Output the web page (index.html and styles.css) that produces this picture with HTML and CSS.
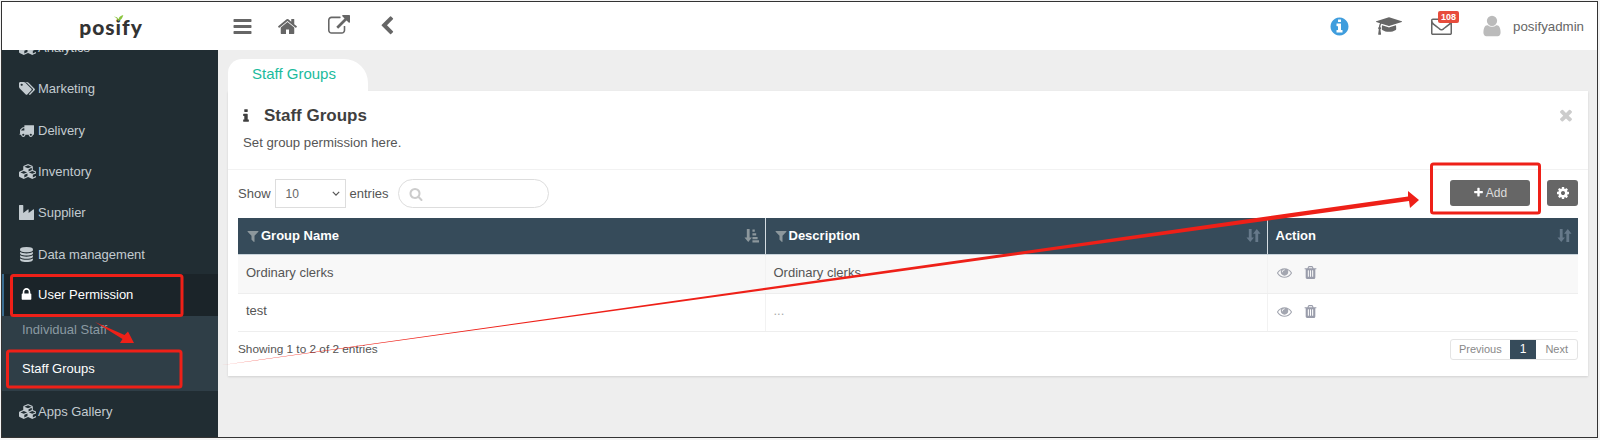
FILE: index.html
```html
<!DOCTYPE html>
<html lang="en">
<head>
    <meta charset="UTF-8">
    <meta name="viewport" content="width=device-width, initial-scale=1.0">
    <title>Staff Groups</title>
    <link rel="stylesheet" href="styles.css">
</head>
<body>
    <!-- icon sprite -->
    <svg class="sprite" xmlns="http://www.w3.org/2000/svg">
        <symbol id="i-bars" viewBox="0 0 1792 1792"><path d="M1664 1344v128q0 26-19 45t-45 19h-1408q-26 0-45-19t-19-45v-128q0-26 19-45t45-19h1408q26 0 45 19t19 45zm0-512v128q0 26-19 45t-45 19h-1408q-26 0-45-19t-19-45v-128q0-26 19-45t45-19h1408q26 0 45 19t19 45zm0-512v128q0 26-19 45t-45 19h-1408q-26 0-45-19t-19-45v-128q0-26 19-45t45-19h1408q26 0 45 19t19 45z"/></symbol>
        <symbol id="i-home" viewBox="0 0 1792 1792"><path d="M1472 992v480q0 26-19 45t-45 19h-384v-384h-256v384h-384q-26 0-45-19t-19-45v-480q0-1 .5-3t.5-3l575-474 575 474q1 2 1 6zm223-69l-62 74q-8 9-21 11h-3q-13 0-21-7l-692-577-692 577q-12 8-24 7-13-2-21-11l-62-74q-8-10-7-23.500t11-21.500l719-599q32-26 76-26t76 26l244 204v-195q0-14 9-23t23-9h192q14 0 23 9t9 23v408l219 182q10 8 11 21.500t-7 23.500z"/></symbol>
        <symbol id="i-external" viewBox="0 0 1792 1792"><path d="M1408 928v320q0 119-84.500 203.500t-203.500 84.500h-832q-119 0-203.500-84.500t-84.500-203.500v-832q0-119 84.500-203.500t203.500-84.500h704q14 0 23 9t9 23v64q0 14-9 23t-23 9h-704q-66 0-113 47t-47 113v832q0 66 47 113t113 47h832q66 0 113-47t47-113v-320q0-14 9-23t23-9h64q14 0 23 9t9 23zm384-864v512q0 26-19 45t-45 19-45-19l-176-176-652 652q-10 10-23 10t-23-10l-114-114q-10-10-10-23t10-23l652-652-176-176q-19-19-19-45t19-45 45-19h512q26 0 45 19t19 45z"/></symbol>
        <symbol id="i-chevron" viewBox="0 0 1792 1792"><path d="M1427 301l-531 531 531 531q19 19 19 45t-19 45l-166 166q-19 19-45 19t-45-19l-742-742q-19-19-19-45t19-45l742-742q19-19 45-19t45 19l166 166q19 19 19 45t-19 45z"/></symbol>
        <symbol id="i-info-circle" viewBox="0 0 1792 1792"><path d="M1152 1376v-160q0-14-9-23t-23-9h-96v-512q0-14-9-23t-23-9h-320q-14 0-23 9t-9 23v160q0 14 9 23t23 9h96v320h-96q-14 0-23 9t-9 23v160q0 14 9 23t23 9h448q14 0 23-9t9-23zm-128-896v-160q0-14-9-23t-23-9h-192q-14 0-23 9t-9 23v160q0 14 9 23t23 9h192q14 0 23-9t9-23zm640 416q0 209-103 385.500t-279.500 279.500-385.500 103-385.500-103-279.500-279.500-103-385.500 103-385.500 279.500-279.500 385.500-103 385.500 103 279.500 279.500 103 385.500z"/></symbol>
        <symbol id="i-info" viewBox="0 0 1792 1792"><path d="M1216 1344v128q0 26-19 45t-45 19h-512q-26 0-45-19t-19-45v-128q0-26 19-45t45-19h64v-384h-64q-26 0-45-19t-19-45v-128q0-26 19-45t45-19h384q26 0 45 19t19 45v576h64q26 0 45 19t19 45zm-128-1152v192q0 26-19 45t-45 19h-256q-26 0-45-19t-19-45v-192q0-26 19-45t45-19h256q26 0 45 19t19 45z"/></symbol>
        <symbol id="i-times" viewBox="0 0 1792 1792"><path d="M1490 1322q0 40-28 68l-136 136q-28 28-68 28t-68-28l-294-294-294 294q-28 28-68 28t-68-28l-136-136q-28-28-28-68t28-68l294-294-294-294q-28-28-28-68t28-68l136-136q28-28 68-28t68 28l294 294 294-294q28-28 68-28t68 28l136 136q28 28 28 68t-28 68l-294 294 294 294q28 28 28 68z"/></symbol>
        <symbol id="i-plus" viewBox="0 0 1792 1792"><path d="M1600 736v192q0 40-28 68t-68 28h-416v416q0 40-28 68t-68 28h-192q-40 0-68-28t-28-68v-416h-416q-40 0-68-28t-28-68v-192q0-40 28-68t68-28h416v-416q0-40 28-68t68-28h192q40 0 68 28t28 68v416h416q40 0 68 28t28 68z"/></symbol>
        <symbol id="i-cog" viewBox="0 0 1792 1792"><path d="M1152 896q0-106-75-181t-181-75-181 75-75 181 75 181 181 75 181-75 75-181zm512-109v222q0 12-8 23t-20 13l-185 28q-19 54-39 91 35 50 107 138 10 12 10 25t-9 23q-27 37-99 108t-94 71q-12 0-26-9l-138-108q-44 23-91 38-16 136-29 186-7 28-36 28h-222q-14 0-24.500-8.500t-11.500-21.500l-28-184q-49-16-90-37l-141 107q-10 9-25 9-14 0-25-11-126-114-165-168-7-10-7-23 0-12 8-23 15-21 51-66.500t54-70.500q-27-50-41-99l-183-27q-13-2-21-12.500t-8-23.500v-222q0-12 8-23t19-13l186-28q14-46 39-92-40-57-107-138-10-12-10-24 0-10 9-23 26-36 98.500-107.500t94.500-71.500q13 0 26 10l138 107q44-23 91-38 16-136 29-186 7-28 36-28h222q14 0 24.500 8.500t11.500 21.500l28 184q49 16 90 37l142-107q9-9 24-9 13 0 25 10 129 119 165 170 7 8 7 22 0 12-8 23-15 21-51 66.500t-54 70.500q26 50 41 98l183 28q13 2 21 12.500t8 23.500z"/></symbol>
        <symbol id="i-filter" viewBox="0 0 1792 1792"><path d="M1595 295q17 41-14 70l-493 493v742q0 42-39 59-13 5-25 5-27 0-45-19l-256-256q-19-19-19-45v-486l-493-493q-31-29-14-70 17-39 59-39h1280q42 0 59 39z"/></symbol>
        <symbol id="i-search" viewBox="0 0 1792 1792"><path d="M1216 832q0-185-131.500-316.500t-316.500-131.500-316.500 131.500-131.500 316.500 131.500 316.500 316.500 131.500 316.500-131.500 131.500-316.500zm512 832q0 52-38 90t-90 38q-54 0-90-38l-343-342q-179 124-399 124-143 0-273.500-55.500t-225-150-150-225-55.500-273.500 55.500-273.500 150-225 225-150 273.500-55.500 273.500 55.500 225 150 150 225 55.500 273.500q0 220-124 399l343 343q37 37 37 90z"/></symbol>
        <symbol id="i-lock" viewBox="0 0 1792 1792" preserveAspectRatio="xMinYMid"><path d="M640 768h512v-192q0-106-75-181t-181-75-181 75-75 181v192zm832 96v576q0 40-28 68t-68 28h-960q-40 0-68-28t-28-68v-576q0-40 28-68t68-28h32v-192q0-184 132-316t316-132 316 132 132 316v192h32q40 0 68 28t28 68z"/></symbol>
        <symbol id="i-eye" viewBox="0 0 1792 1792"><path d="M1664 960q-152-236-381-353 61 104 61 225 0 185-131.500 316.500t-316.500 131.500-316.500-131.500-131.500-316.500q0-121 61-225-229 117-381 353 133 205 333.500 326.500t434.500 121.500 434.500-121.500 333.500-326.500zm-720-384q0-20-14-34t-34-14q-125 0-214.500 89.500t-89.500 214.500q0 20 14 34t34 14 34-14 14-34q0-86 61-147t147-61q20 0 34-14t14-34zm848 384q0 34-20 69-140 230-376.500 368.500t-499.500 138.500-499.500-139-376.500-368q-20-35-20-69t20-69q140-229 376.500-368t499.500-139 499.500 139 376.500 368q20 35 20 69z"/></symbol>
        <symbol id="i-trash" viewBox="0 0 1792 1792"><path d="M704 1376v-704q0-14-9-23t-23-9h-64q-14 0-23 9t-9 23v704q0 14 9 23t23 9h64q14 0 23-9t9-23zm256 0v-704q0-14-9-23t-23-9h-64q-14 0-23 9t-9 23v704q0 14 9 23t23 9h64q14 0 23-9t9-23zm256 0v-704q0-14-9-23t-23-9h-64q-14 0-23 9t-9 23v704q0 14 9 23t23 9h64q14 0 23-9t9-23zm-544-992h448l-48-117q-7-9-17-11h-317q-10 2-17 11zm928 32v64q0 14-9 23t-23 9h-96v948q0 83-47 143.500t-113 60.500h-832q-66 0-113-58.500t-47-141.500v-952h-96q-14 0-23-9t-9-23v-64q0-14 9-23t23-9h309l70-167q15-37 54-63t79-26h320q40 0 79 26t54 63l70 167h309q14 0 23 9t9 23z"/></symbol>
        <symbol id="i-database" viewBox="0 0 1792 1792" preserveAspectRatio="xMinYMid"><path d="M896 768q237 0 443-43t325-127v170q0 69-103 128t-280 93.500-385 34.500-385-34.500-280-93.500-103-128v-170q119 84 325 127t443 43zm0 768q237 0 443-43t325-127v170q0 69-103 128t-280 93.500-385 34.500-385-34.500-280-93.500-103-128v-170q119 84 325 127t443 43zm0-384q237 0 443-43t325-127v170q0 69-103 128t-280 93.500-385 34.500-385-34.500-280-93.500-103-128v-170q119 84 325 127t443 43zm0-1152q208 0 385 34.500t280 93.500 103 128v128q0 69-103 128t-280 93.500-385 34.500-385-34.500-280-93.500-103-128v-128q0-69 103-128t280-93.500 385-34.500z"/></symbol>
        <symbol id="i-user" viewBox="0 0 1792 1792"><path d="M1536 1399q0 109-62.500 187t-150.500 78h-854q-88 0-150.500-78t-62.500-187q0-85 8.500-160.500t31.500-152 58.500-131 94-89 134.500-34.500q131 128 313 128t313-128q76 0 134.500 34.500t94 89 58.500 131 31.500 152 8.500 160.500zm-256-887q0 159-112.500 271.500t-271.500 112.500-271.500-112.500-112.500-271.500 112.500-271.500 271.500-112.500 271.500 112.500 112.500 271.500z"/></symbol>
        <symbol id="i-envelope" viewBox="0 0 1792 1792"><path d="M1664 1504v-768q-32 36-69 66-268 206-426 338-51 43-83 67t-86.500 48.500-102.500 24.500h-2q-48 0-102.500-24.500t-86.500-48.500-83-67q-158-132-426-338-37-30-69-66v768q0 13 9.500 22.500t22.500 9.500h1472q13 0 22.500-9.500t9.500-22.500zm0-1051v-24.500l-.5-13-3-12.500-5.500-9-9-7.500-14-2.500h-1472q-13 0-22.500 9.500t-9.500 22.500q0 168 147 284 193 152 401 317 6 5 35 29.500t46 37.500 44.500 31.500 50.500 27.500 43 9h2q20 0 43-9t50.500-27.500 44.500-31.500 46-37.500 35-29.500q208-165 401-317 54-43 100.500-115.500t46.500-131.500zm128-37v1088q0 66-47 113t-113 47h-1472q-66 0-113-47t-47-113v-1088q0-66 47-113t113-47h1472q66 0 113 47t47 113z"/></symbol>
        <symbol id="i-cap" viewBox="0 0 2304 1792"><path d="M1774 836l18 316q4 69-82 128t-235 93.500-323 34.500-323-34.500-235-93.500-82-128l18-316 574 181q22 7 48 7t48-7zm530-324q0 23-22 31l-1120 352q-4 1-10 1t-10-1l-652-206q-43 34-71 111.500t-34 178.500q63 36 63 109 0 69-58 107l58 433q2 14-8 25-9 11-24 11h-192q-15 0-24-11-10-11-8-25l58-433q-58-38-58-107 0-73 65-111 11-207 98-330l-333-104q-22-8-22-31t22-31l1120-352q4-1 10-1t10 1l1120 352q22 8 22 31z"/></symbol>
        <symbol id="i-tags" viewBox="0 0 1920 1792" preserveAspectRatio="xMinYMid"><path d="M448 448q0-53-37.500-90.500t-90.500-37.500-90.500 37.500-37.500 90.500 37.500 90.500 90.500 37.500 90.500-37.500 37.500-90.500zm1067 576q0 53-37 90l-491 492q-39 37-91 37-53 0-90-37l-715-716q-38-37-64.500-101t-26.500-117v-416q0-52 38-90t90-38h416q53 0 117 26.500t102 64.500l715 714q37 39 37 91zm384 0q0 53-37 90l-491 492q-39 37-91 37-36 0-59-14t-53-45l470-470q37-37 37-90 0-52-37-91l-715-714q-38-38-102-64.500t-117-26.500h224q53 0 117 26.500t102 64.500l715 714q37 39 37 91z"/></symbol>
        <symbol id="i-truck" viewBox="0 0 1792 1792" preserveAspectRatio="xMinYMid"><path d="M640 1408q0-52-38-90t-90-38-90 38-38 90 38 90 90 38 90-38 38-90zm-384-512h384v-256h-158q-13 0-22 9l-195 195q-9 9-9 22v30zm1280 512q0-52-38-90t-90-38-90 38-38 90 38 90 90 38 90-38 38-90zm256-1088v1024q0 15-4 26.500t-13.500 18.500-16.500 11.500-23.500 6-22.500 2-25.500 0-22.500-.5q0 106-75 181t-181 75-181-75-75-181h-384q0 106-75 181t-181 75-181-75-75-181h-64q-3 0-22.500.5t-25.500 0-22.500-2-23.500-6-16.500-11.500-13.500-18.500-4-26.500q0-26 19-45t45-19v-320q0-8-.5-35t0-38 2.500-34.500 6.500-37 14-30.500 22.500-30l198-198q19-19 50.500-32t58.500-13h160v-192q0-26 19-45t45-19h1024q26 0 45 19t19 45z"/></symbol>
        <symbol id="i-industry" viewBox="0 0 1792 1792" preserveAspectRatio="xMinYMid"><path d="M448 0q26 0 45 19t19 45v891l536-429q17-14 40-14 26 0 45 19t19 45v379l536-429q17-14 40-14 26 0 45 19t19 45v1152q0 26-19 45t-45 19h-1664q-26 0-45-19t-19-45v-1664q0-26 19-45t45-19h384z"/></symbol>
        <symbol id="i-cubes" viewBox="0 0 2048 1792" preserveAspectRatio="xMinYMid"><path d="M640 1632l384-192v-314l-384 164v342zm-64-454l404-173-404-173-404 173zm1088 454l384-192v-314l-384 164v342zm-64-454l404-173-404-173-404 173zm-448-293l384-165v-266l-384 164v267zm-64-379l441-189-441-189-441 189zm1088 518v416q0 36-19 67t-52 47l-448 224q-25 14-57 14t-57-14l-448-224q-4-2-7-4-2 2-7 4l-448 224q-25 14-57 14t-57-14l-448-224q-33-16-52-47t-19-67v-416q0-38 21.500-70t56.500-48l434-186v-400q0-38 21.500-70t56.500-48l448-192q23-10 50-10t50 10l448 192q35 16 56.500 48t21.500 70v400l434 186q36 16 57 48t21 70z"/></symbol>
        <symbol id="i-sort" viewBox="0 0 16 16"><path d="M3 1h3v9h2.500l-4 5-4-5H3zM10 6H7.500l4-5 4 5H13v9h-3z"/></symbol>
        <symbol id="i-sort-asc" viewBox="0 0 16 16"><path d="M3 1h3v9h2.500l-4 5-4-5H3zM9 1.500h2.500v2.500H9zM9 5.500h4v2.500H9zM9 9.500h5.500V12H9zM9 13h7v2.500H9z"/></symbol>
    </svg>

    <div class="app">
        <header class="topbar">
            <div class="logo">
                <span class="logo-text">posify</span>
                <svg class="logo-leaf" viewBox="0 0 16 10"><path d="M7 10C6 6 4 4 0 3c4-1 7 1 8 5 0-4 3-7 8-8-1 5-4 9-9 10z"/></svg>
            </div>
            <nav class="top-tools">
                <svg class="tool tool-bars"><use href="#i-bars"/></svg>
                <svg class="tool tool-home"><use href="#i-home"/></svg>
                <svg class="tool tool-ext"><use href="#i-external"/></svg>
                <svg class="tool tool-back"><use href="#i-chevron"/></svg>
            </nav>
            <div class="top-right">
                <svg class="top-info"><use href="#i-info-circle"/></svg>
                <svg class="top-cap"><use href="#i-cap"/></svg>
                <div class="mail">
                    <svg class="top-mail"><use href="#i-envelope"/></svg>
                    <span class="badge">108</span>
                </div>
                <svg class="top-user"><use href="#i-user"/></svg>
                <span class="username">posifyadmin</span>
            </div>
        </header>

        <aside class="sidebar">
            <ul class="menu">
                <li class="menu-item"><svg class="menu-icon"><use href="#i-cubes"/></svg>Analytics</li>
                <li class="menu-item"><svg class="menu-icon"><use href="#i-tags"/></svg>Marketing</li>
                <li class="menu-item"><svg class="menu-icon"><use href="#i-truck"/></svg>Delivery</li>
                <li class="menu-item"><svg class="menu-icon"><use href="#i-cubes"/></svg>Inventory</li>
                <li class="menu-item"><svg class="menu-icon"><use href="#i-industry"/></svg>Supplier</li>
                <li class="menu-item"><svg class="menu-icon"><use href="#i-database"/></svg>Data management</li>
                <li class="menu-item active"><svg class="menu-icon"><use href="#i-lock"/></svg>User Permission</li>
                <li class="submenu">
                    <div class="sub-item">Individual Staff</div>
                    <div class="sub-item current">Staff Groups</div>
                </li>
                <li class="menu-item"><svg class="menu-icon"><use href="#i-cubes"/></svg>Apps Gallery</li>
            </ul>
        </aside>

        <main class="content">
            <div class="tabs"><div class="tab">Staff Groups</div></div>
            <section class="panel">
                <div class="panel-head">
                    <h2 class="panel-title"><svg class="title-icon"><use href="#i-info"/></svg>Staff Groups</h2>
                    <p class="panel-desc">Set group permission here.</p>
                    <svg class="panel-close"><use href="#i-times"/></svg>
                </div>
                <div class="panel-body">
                    <div class="controls">
                        <label class="length">Show
                            <span class="select">10<svg class="caret" viewBox="0 0 10 6"><path d="M1 1l4 4 4-4"/></svg></span>
                            entries</label>
                        <div class="search"><svg class="search-icon"><use href="#i-search"/></svg></div>
                        <button class="btn-add"><svg class="plus"><use href="#i-plus"/></svg>Add</button>
                        <button class="btn-cog"><svg class="cog"><use href="#i-cog"/></svg></button>
                    </div>
                    <table class="groups">
                        <thead>
                            <tr>
                                <th class="col-name"><div class="th-in"><svg class="th-filter"><use href="#i-filter"/></svg>Group Name<svg class="th-sort"><use href="#i-sort-asc"/></svg></div></th>
                                <th class="col-desc"><div class="th-in"><svg class="th-filter"><use href="#i-filter"/></svg>Description<svg class="th-sort dim"><use href="#i-sort"/></svg></div></th>
                                <th><div class="th-in">Action<svg class="th-sort dim"><use href="#i-sort"/></svg></div></th>
                            </tr>
                        </thead>
                        <tbody>
                            <tr class="odd">
                                <td>Ordinary clerks</td>
                                <td>Ordinary clerks</td>
                                <td class="actions"><svg class="act-eye"><use href="#i-eye"/></svg><svg class="act-trash"><use href="#i-trash"/></svg></td>
                            </tr>
                            <tr>
                                <td>test</td>
                                <td class="muted">...</td>
                                <td class="actions"><svg class="act-eye"><use href="#i-eye"/></svg><svg class="act-trash"><use href="#i-trash"/></svg></td>
                            </tr>
                        </tbody>
                    </table>
                    <div class="table-foot">
                        <span class="info">Showing 1 to 2 of 2 entries</span>
                        <div class="pager">
                            <span class="page">Previous</span>
                            <span class="page on">1</span>
                            <span class="page">Next</span>
                        </div>
                    </div>
                </div>
            </section>
        </main>
    </div>

    <!-- red markup drawn over the screenshot -->
    <svg class="markup" viewBox="0 0 1600 440">
        <rect x="11.500" y="275.500" width="170.500" height="40" rx="2"/>
        <rect x="7.500" y="351" width="173.500" height="36" rx="2"/>
        <rect x="1431.500" y="164" width="108" height="49" rx="2"/>
        <polygon class="fill" points="219,365.500 1408,196.500 1408,191 1419,200 1410,208 1409,201"/>
        <polygon class="fill" points="95,322 124.500,335 128,331.500 134,343 120,343 122.500,339"/>
    </svg>
</body>
</html>
```

FILE: styles.css
```css
* {
    box-sizing: border-box;
}
body {
    margin: 0;
    background: #f4f4f4;
    font-family: "Liberation Sans", Arial, sans-serif;
    font-size: 13px;
    color: #444;
    position: relative;
    width: 1600px;
    height: 440px;
    overflow: hidden;
}
svg {
    fill: currentColor;
}
.sprite {
    display: none;
}
.app {
    width: 1597px;
    height: 437px;
    margin: 1px 0 0 1px;
    border: 1px solid #333;
    display: grid;
    grid-template-columns: 216px 1fr;
    grid-template-rows: 48px 1fr;
    overflow: hidden;
}

/* top bar */
.topbar {
    grid-column: 1 / 3;
    background: #fff;
    display: flex;
    align-items: center;
    position: relative;
    z-index: 2;
}
.logo {
    width: 216px;
    display: flex;
    justify-content: center;
    position: relative;
    padding-left: 2px;
}
.logo-text {
    font-family: Lato, "Noto Sans", sans-serif;
    font-weight: 900;
    font-size: 21px;
    letter-spacing: 1px;
    color: #333;
}
.logo-leaf {
    position: absolute;
    left: 111px;
    top: 1px;
    width: 11px;
    height: 6px;
    fill: #8bc53f;
}
.top-tools {
    display: flex;
    align-items: center;
    color: #666;
    padding-left: 14px;
}
.tool {
    display: block;
}
.tool-bars {
    width: 21px;
    height: 21px;
    margin-right: 24px;
}
.tool-home {
    width: 21px;
    height: 21px;
    margin-right: 30px;
}
.tool-ext {
    width: 22px;
    height: 22px;
    margin-right: 27px;
}
.tool-back {
    width: 20px;
    height: 20px;
}
.top-right {
    margin-left: auto;
    display: flex;
    align-items: center;
    color: #666;
    padding-right: 13px;
}
.top-info {
    width: 21px;
    height: 21px;
    color: #3f9ddd;
    margin-right: 26px;
}
.top-cap {
    width: 26px;
    height: 22px;
    margin-right: 29px;
}
.mail {
    position: relative;
    width: 21px;
    height: 22px;
    margin-right: 28px;
}
.top-mail {
    width: 21px;
    height: 22px;
    display: block;
}
.badge {
    position: absolute;
    left: 7px;
    top: -4px;
    background: #e74c3c;
    color: #fff;
    font-size: 9px;
    font-weight: bold;
    line-height: 12px;
    padding: 0 3px;
    border-radius: 2px;
}
.top-user {
    width: 24px;
    height: 24px;
    color: #bbb;
    margin-right: 9px;
}
.username {
    font-size: 13.300px;
    color: #666;
}

/* sidebar */
.sidebar {
    background: #212d33;
    overflow: hidden;
}
.menu {
    list-style: none;
    margin: -23px 0 0;
    padding: 0;
}
.menu-item {
    height: 41.300px;
    display: flex;
    align-items: center;
    padding-left: 17px;
    color: #c3cbd0;
}
.menu-item.active {
    height: 42px;
    margin-top: -1px;
    background: #1b2429;
    color: #fff;
    border-left: 2px solid #3a6d92;
    padding-left: 15px;
}
.menu-icon {
    width: 17px;
    height: 15px;
    margin-right: 2px;
    flex-shrink: 0;
}
.submenu {
    background: #2f3e47;
    height: 75px;
}
.sub-item {
    height: 37.500px;
    line-height: 28px;
    padding-left: 20px;
    color: #8b9aa2;
}
.sub-item.current {
    color: #fff;
    line-height: 32px;
}

/* main */
.content {
    background: #eee;
    padding: 9px 9px 0 10px;
}
.tabs {
    height: 32px;
    display: flex;
}
.tab {
    width: 140px;
    background: #fff;
    color: #1abb9c;
    font-size: 15px;
    line-height: 30px;
    padding-left: 24px;
    border-radius: 14px 24px 0 0;
}
.panel {
    background: #fff;
    height: 285px;
    box-shadow: 0 1px 2px rgba(0, 0, 0, 0.12);
}
.panel-head {
    height: 79px;
    padding: 15px 10px 0;
    border-bottom: 1px solid #f2f2f2;
    position: relative;
}
.panel-title {
    margin: 0;
    font-size: 17px;
    line-height: 20px;
    color: #3f3f3f;
    display: flex;
    align-items: center;
}
.title-icon {
    width: 16px;
    height: 16px;
    margin-right: 10px;
    flex-shrink: 0;
}
.panel-desc {
    margin: 8px 0 0 5px;
    font-size: 13.200px;
    line-height: 18px;
    color: #555;
}
.panel-close {
    position: absolute;
    right: 13px;
    top: 15px;
    width: 18px;
    height: 18px;
    color: #ccc;
}
.panel-body {
    padding: 0 10px;
}
.controls {
    height: 48px;
    display: flex;
    align-items: center;
    color: #555;
    padding-bottom: 1px;
}
.length {
    display: flex;
    align-items: center;
    gap: 4px;
}
.select {
    width: 71px;
    height: 29px;
    border: 1px solid #ddd;
    font-size: 12px;
    color: #666;
    display: flex;
    align-items: center;
    justify-content: space-between;
    padding: 0 5px 0 10px;
}
.caret {
    width: 8px;
    height: 5px;
    fill: none;
    stroke: #555;
    stroke-width: 1.500;
}
.search {
    width: 151px;
    height: 29px;
    margin-left: 9px;
    border: 1px solid #ddd;
    border-radius: 15px;
    display: flex;
    align-items: center;
    padding-left: 10px;
}
.search-icon {
    width: 14px;
    height: 14px;
    color: #ccc;
}
.btn-add {
    margin: 0 0 2px auto;
    width: 80px;
    height: 26px;
    border: none;
    border-radius: 3px;
    background: #666;
    color: #ddd;
    font: 12px "Liberation Sans", Arial, sans-serif;
    display: flex;
    align-items: center;
    justify-content: center;
    padding: 0;
}
.plus {
    width: 11px;
    height: 11px;
    color: #fff;
    margin-right: 2px;
}
.btn-cog {
    margin: 0 0 2px 17px;
    width: 31px;
    height: 26px;
    border: none;
    border-radius: 3px;
    background: #666;
    display: flex;
    align-items: center;
    justify-content: center;
    padding: 0;
}
.cog {
    width: 14px;
    height: 14px;
    color: #fff;
}
.groups {
    width: 100%;
    border-collapse: collapse;
    table-layout: fixed;
}
.groups th {
    background: #364b5a;
    color: #fff;
    font-size: 13px;
    height: 36px;
    padding: 0 6px 0 8px;
    text-align: left;
    border-left: 1px solid #d5dde2;
    border-bottom: 1px solid #c9d4db;
}
.groups th:first-child {
    border-left: none;
}
.col-name {
    width: 527px;
}
.col-desc {
    width: 502px;
}
.th-in {
    display: flex;
    align-items: center;
}
.th-filter {
    width: 14px;
    height: 14px;
    color: #8c979c;
    margin-right: 1px;
}
.th-sort {
    width: 15px;
    height: 15px;
    margin-left: auto;
    color: #8c979c;
}
.th-sort.dim {
    color: #66798a;
}
.groups td {
    height: 38px;
    padding: 0 8px 3px;
    border-left: 1px solid #f2f2f2;
    border-bottom: 1px solid #eee;
    color: #555;
}
.groups td:first-child {
    border-left: none;
}
.odd td {
    background: #f8f8f8;
}
.groups .odd td {
    height: 39px;
}
.groups td.muted {
    color: #aaa;
}
.actions svg {
    vertical-align: middle;
}
.act-eye {
    width: 15px;
    height: 15px;
    color: #a3a6b0;
    margin-left: 1px;
}
.act-trash {
    width: 15px;
    height: 15px;
    color: #9a9dab;
    margin-left: 11px;
}
.table-foot {
    display: flex;
    justify-content: space-between;
    align-items: center;
    height: 36px;
}
.info {
    font-size: 11.800px;
    color: #555;
    margin-bottom: 2px;
}
.pager {
    display: flex;
    height: 21px;
    border: 1px solid #e4e4e4;
    border-radius: 3px;
}
.page {
    padding: 0 9px;
    line-height: 19px;
    font-size: 11px;
    color: #888;
}
.page:first-child {
    padding: 0 8px;
}
.page.on {
    background: #364b5a;
    color: #fff;
    font-size: 12px;
    padding: 0 10px;
}

/* annotations */
.markup {
    position: absolute;
    left: 0;
    top: 0;
    width: 1600px;
    height: 440px;
    fill: none;
    stroke: #ee2018;
    stroke-width: 3;
    pointer-events: none;
}
.markup .fill {
    fill: #ee2018;
    stroke: none;
}
```
